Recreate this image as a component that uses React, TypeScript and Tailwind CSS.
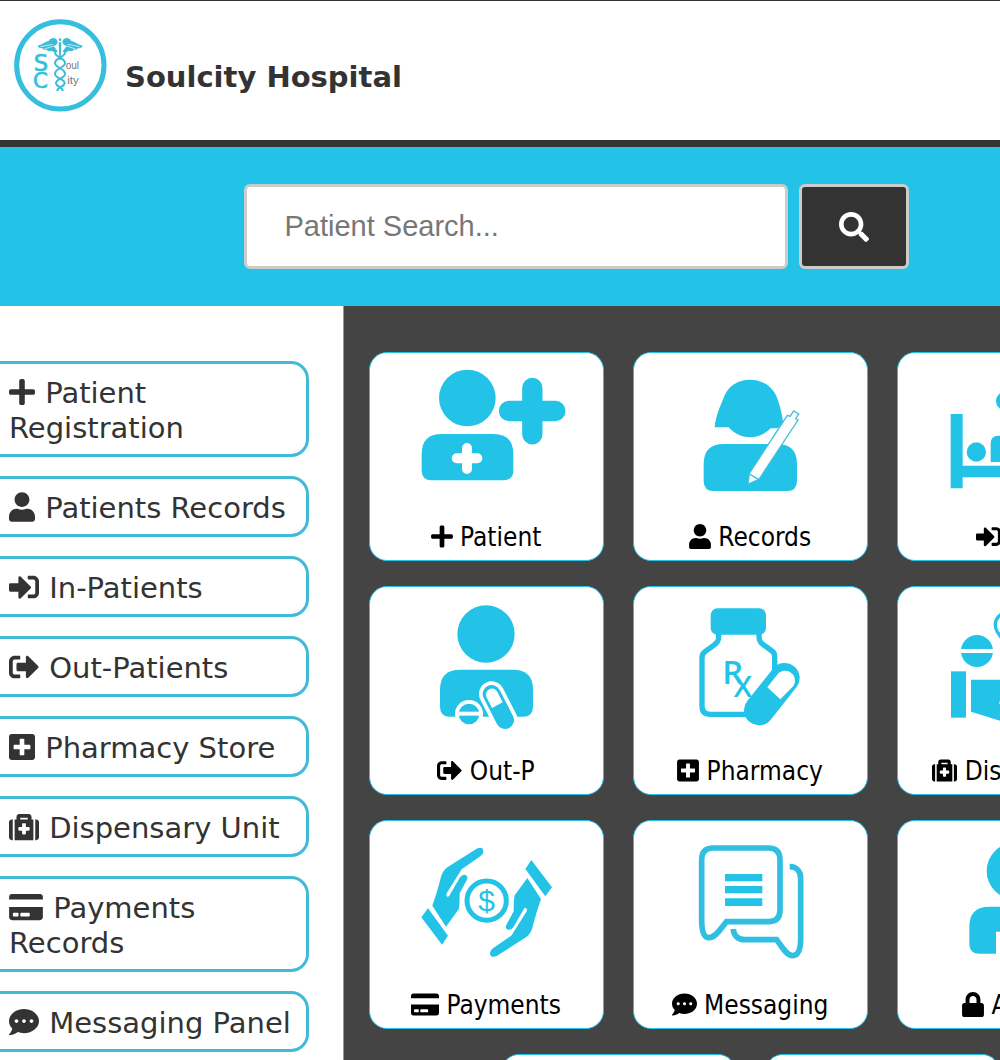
import type { ReactNode } from "react";
import type { IconType } from "react-icons";
import {
  FaCommentDots,
  FaCreditCard,
  FaLock,
  FaMedkit,
  FaPlus,
  FaPlusSquare,
  FaSearch,
  FaSignInAlt,
  FaSignOutAlt,
  FaUser,
} from "react-icons/fa";

const CYAN = "#23c3e8";

function Logo() {
  return (
    <svg className="h-[94px] w-[94px] shrink-0" viewBox="24 24 282 282" role="img" aria-label="Soulcity logo" fill="none">
      <circle cx="166" cy="166" r="131" stroke="#34bfde" strokeWidth="15" />
      <g fill="#3dbcd8">
        <path d="M158 96C156 82 138 80 132 92L122 96Q110 104 98 107Q101 115 113 115Q114 121 125 119Q130 127 139 122L152 130L158 124L146 108Q156 106 158 96Z" />
        <path d="M172 96C174 82 192 80 198 92L208 96Q220 104 233 107Q230 115 218 115Q217 121 206 119Q201 127 192 122L179 130L173 124L185 108Q175 106 172 96Z" />
        <circle cx="165" cy="89" r="4" />
        <path d="M161 97H169L167 150H163Z" />
      </g>
      <g stroke="#fff" strokeWidth="2">
        <path d="M106 110L143 103M118 117L146 108M224 110L188 103M212 117L185 108" />
      </g>
      <g stroke="#3dbcd8" strokeWidth="6">
        <path d="M150 128C150 140 182 146 180 160C178 174 148 176 150 192C151 206 180 206 179 220C178 230 156 230 157 243" />
        <path d="M180 128C180 140 148 146 150 160C152 174 181 176 180 192C179 206 152 206 153 220C154 230 174 230 173 243" />
      </g>
      <g fontFamily="DejaVu Sans, sans-serif" fill="#34bfde" stroke="#34bfde" strokeWidth="2">
        <text x="86" y="183" fontSize="68">S</text>
        <text x="84" y="234" fontSize="64">C</text>
      </g>
      <g fontFamily="Liberation Sans, sans-serif" fill="#777">
        <text x="182" y="178" fontSize="30">oul</text>
        <text x="187" y="223" fontSize="34">ity</text>
      </g>
    </svg>
  );
}

function Art({ x, y, children }: { x: number; y: number; children: ReactNode }) {
  return (
    <svg className="w-full" viewBox={`${x} ${y} 699 480`} fill={CYAN} aria-hidden="true">
      {children}
    </svg>
  );
}

const patientArt = (
  <Art x={30} y={39}>
    <circle cx="322" cy="174" r="85" />
    <path d="M185 342Q185 282 245 282H400Q460 282 460 342V391Q460 421 430 421H215Q185 421 185 391Z" />
    <path d="M321 324V387M290 355H352" stroke="#fff" strokeWidth="30" strokeLinecap="round" />
    <path d="M517 144V283M447 213H586" stroke={CYAN} strokeWidth="61" strokeLinecap="round" />
  </Art>
);

const recordsArt = (
  <Art x={27} y={39}>
    <path d="M269 262C272 225 288 195 297 170C308 140 337 119 375 119C413 119 442 140 455 170C465 195 471 222 475 250L457 265H437C420 282 400 292 375 292C350 292 328 281 311 262Z" />
    <path d="M236 372Q236 312 296 312H456Q516 312 516 372V423Q516 453 486 453H266Q236 453 236 423Z" />
    <path d="M369 432L373 400L487 226L495 229L506 213L521 222L512 236L519 240L402 418Z" fill="#fff" stroke="#45bfdb" strokeWidth="4" />
    <path d="M373 402L402 419" stroke={CYAN} strokeWidth="4" />
  </Art>
);

const inPatientArt = (
  <Art x={819} y={39}>
    <path d="M977 222H1013V377H1330V222H1366V445H1330V412H1013V445H977Z" />
    <circle cx="1054" cy="336" r="29" />
    <path d="M1097 366V310Q1097 287 1120 287H1300V366Z" />
    <circle cx="1141" cy="183" r="28" />
  </Art>
);

const outPatientArt = (
  <Art x={30} y={21}>
    <circle cx="378" cy="162" r="86" />
    <path d="M240 329Q240 269 300 269H459Q519 269 519 329V380Q519 410 489 410H270Q240 410 240 380Z" />
    <circle cx="327" cy="402" r="42" fill="#fff" />
    <circle cx="327" cy="402" r="31" />
    <path d="M285 401H369" stroke="#fff" strokeWidth="12" />
    <g strokeLinecap="round">
      <path d="M395 342L435 420" stroke="#fff" strokeWidth="76" />
      <path d="M395 342L435 420" stroke={CYAN} strokeWidth="54" />
    </g>
    <path d="M379 350A18 18 0 0 1 411 334L428 367L396 384Z" fill="#fff" />
  </Art>
);

const pharmacyArt = (
  <Art x={27} y={21}>
    <rect x="257" y="85" width="166" height="79" rx="20" />
    <path
      d="M281 160V170C281 185 275 189 266 196L240 215Q231 221 231 233V378Q231 403 256 403H380M402 160V170C402 185 409 189 418 196L441 213Q449 219 449 230V280"
      fill="none"
      stroke={CYAN}
      strokeWidth="16"
    />
    <g fontFamily="Open Sans, sans-serif" fontWeight="600">
      <text x="292" y="311" fontSize="98">R</text>
      <text x="326" y="350" fontSize="88">X</text>
    </g>
    <path d="M402 391L479 294" stroke={CYAN} strokeWidth="90" strokeLinecap="round" />
    <path d="M427 322L454 287A30 30 0 0 1 506 317L466 358Z" fill="#fff" />
  </Art>
);

const dispensaryArt = (
  <Art x={819} y={21}>
    <circle cx="1056" cy="213" r="48" />
    <path d="M1000 213H1112" stroke="#fff" strokeWidth="12" />
    <path d="M978 274H1023V413H978Z" />
    <path d="M1038 299H1180L1300 340L1170 436L1038 395Z" />
    <circle cx="1129" cy="368" r="6" fill="#fff" />
    <path d="M1200 230L1160 218L1116 154C1104 130 1114 108 1138 98C1160 92 1176 104 1186 120L1210 160Z" fill="#fff" stroke={CYAN} strokeWidth="10" />
  </Art>
);

const hand = (
  <>
    <path d="M204 295L184 322L246 404L264 377Z" />
    <path d="M350 116Q370 108 370 126Q370 133 361 139L305 178L260 250Q257 264 267 259L300 202Q310 190 320 197Q325 203 320 211L299 250Q299 285 296 298L258 350L217 287Q230 250 240 212Q246 182 262 172Z" />
  </>
);

const paymentsArt = (
  <Art x={30} y={33}>
    {hand}
    <g transform="rotate(180 380 277)">{hand}</g>
    <circle cx="380" cy="272" r="59" fill="#fff" stroke={CYAN} strokeWidth="15" />
    <text x="380" y="304" fontSize="90" textAnchor="middle" fontFamily="Liberation Sans, sans-serif">$</text>
  </Art>
);

const messagingArt = (
  <Art x={27} y={33}>
    <g fill="none" stroke="#30bfe0" strokeWidth="17">
      <path d="M265 114H430Q465 114 465 149V300Q465 335 430 335H304C288 355 272 383 252 383C236 383 230 360 230 330V149Q230 114 265 114Z" />
      <path d="M494 170C515 170 527 185 527 205V385C527 415 520 437 503 437C485 437 470 410 455 389H360C338 389 325 375 325 357" />
    </g>
    <path d="M300 192H412V214H300ZM300 228H412V250H300ZM300 265H412V288H300Z" />
  </Art>
);

const adminArt = (
  <Art x={819} y={33}>
    <circle cx="1170" cy="183" r="85" />
    <path d="M1033 350Q1033 290 1093 290H1247Q1307 290 1307 350V401Q1307 431 1277 431H1227V365H1113V431H1063Q1033 431 1033 401Z" />
  </Art>
);

const MENU_ICON = { narrow: "w-[26px]", square: "w-[30px]", wide: "w-[34px]" };
const TILE_ICON = { narrow: "w-[22px]", square: "w-[25px]", wide: "w-[28px]" };

type Shape = keyof typeof MENU_ICON;

const menu: { icon: IconType; shape: Shape; label: string }[] = [
  { icon: FaPlus, shape: "narrow", label: "Patient Registration" },
  { icon: FaUser, shape: "narrow", label: "Patients Records" },
  { icon: FaSignInAlt, shape: "square", label: "In-Patients" },
  { icon: FaSignOutAlt, shape: "square", label: "Out-Patients" },
  { icon: FaPlusSquare, shape: "narrow", label: "Pharmacy Store" },
  { icon: FaMedkit, shape: "square", label: "Dispensary Unit" },
  { icon: FaCreditCard, shape: "wide", label: "Payments Records" },
  { icon: FaCommentDots, shape: "square", label: "Messaging Panel" },
];

const tiles: { icon: IconType; shape: Shape; label: string; art: ReactNode }[] = [
  { icon: FaPlus, shape: "narrow", label: "Patient", art: patientArt },
  { icon: FaUser, shape: "narrow", label: "Records", art: recordsArt },
  { icon: FaSignInAlt, shape: "square", label: "In-P", art: inPatientArt },
  { icon: FaSignOutAlt, shape: "square", label: "Out-P", art: outPatientArt },
  { icon: FaPlusSquare, shape: "narrow", label: "Pharmacy", art: pharmacyArt },
  { icon: FaMedkit, shape: "square", label: "Dispensary", art: dispensaryArt },
  { icon: FaCreditCard, shape: "wide", label: "Payments", art: paymentsArt },
  { icon: FaCommentDots, shape: "square", label: "Messaging", art: messagingArt },
  { icon: FaLock, shape: "narrow", label: "Admin", art: adminArt },
];

export default function App() {
  return (
    <div className="h-screen overflow-hidden bg-white">
      <div className="flex h-full min-w-[1152px] flex-col font-['DejaVu_Sans',sans-serif] text-[#333]">
        <header className="flex shrink-0 items-start gap-[18px] border-t border-b-[7px] border-t-[#333] border-b-[#323436] pt-[17px] pb-[28px] pl-[13px]">
          <Logo />
          <h1 className="pt-[41px] text-[29px] leading-[36px] font-bold">Soulcity Hospital</h1>
        </header>

        <form className="flex shrink-0 justify-center gap-[11px] bg-[#23c3e8] pt-[37px] pb-[37px]" onSubmit={(e) => e.preventDefault()}>
          <input
            type="search"
            aria-label="Patient search"
            placeholder="Patient Search..."
            className="h-[85px] w-[544px] rounded-[6px] border-[3px] border-[#ccc] bg-white px-[38px] font-['Liberation_Sans',sans-serif] text-[29px] placeholder:text-[#777]"
          />
          <button
            type="submit"
            aria-label="Search"
            className="flex h-[85px] w-[110px] items-center justify-center rounded-[6px] border-[3px] border-[#ccc] bg-[#333] text-[30px] text-white"
          >
            <FaSearch />
          </button>
        </form>

        <div className="flex min-h-0 flex-1">
          <nav className="w-[344px] shrink-0 overflow-hidden border-r border-[#23c3e8] pt-[55px] pr-[34px]">
            <ul className="flex flex-col gap-[19px]">
              {menu.map(({ icon: Icon, shape, label }) => (
                <li key={label}>
                  <a
                    href="#"
                    className="block rounded-r-[18px] border-[3px] border-l-0 border-[#40bad5] pt-[12px] pr-[10px] pb-[8px] pl-[9px] text-[29px] leading-[35px]"
                  >
                    <Icon className={`mr-[1px] inline-block h-[30px] align-[-4px] ${MENU_ICON[shape]}`} /> {label}
                  </a>
                </li>
              ))}
            </ul>
          </nav>

          <main className="flex flex-1 flex-wrap content-start justify-center gap-x-[29px] gap-y-[25px] overflow-hidden bg-[#444] pt-[46px] pl-[4px] text-black">
            {tiles.map(({ icon: Icon, shape, label, art }) => (
              <a key={label} href="#" className="flex h-[209px] w-[235px] flex-col rounded-[18px] border border-[#23c3e8] bg-white">
                {art}
                <span className="mt-[9px] text-center font-['DejaVu_Sans_Condensed','DejaVu_Sans',sans-serif] text-[26px] leading-[30px]">
                  <Icon className={`inline-block h-[25px] align-[-3px] ${TILE_ICON[shape]}`} /> {label}
                </span>
              </a>
            ))}
            <div className="h-[209px] w-[235px] rounded-[18px] border border-[#23c3e8] bg-white" />
            <div className="h-[209px] w-[235px] rounded-[18px] border border-[#23c3e8] bg-white" />
          </main>
        </div>
      </div>
    </div>
  );
}
